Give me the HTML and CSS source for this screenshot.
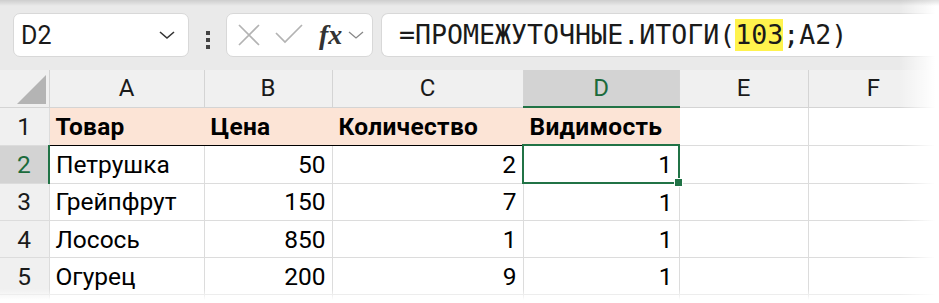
FILE: index.html
```html
<!DOCTYPE html>
<html>
<head>
<meta charset='UTF-8'>
<meta name='viewport' content='width=device-width, initial-scale=1.0'>
<link rel="stylesheet" href="styles.css">
</head>
<body>

<div class="bar">
  <div class="namebox">
    <span class="ref">D2</span>
    <svg class="chev" width="18" height="10" viewBox="0 0 18 10"><path d="M2 2 L9 8 L16 2" fill="none" stroke="#333" stroke-width="1.6"/></svg>
  </div>
  <div class="dots"><i></i><i></i><i></i></div>
  <div class="fxbox">
    <svg width="24" height="24" viewBox="0 0 24 24"><path d="M2 2 L22 22 M22 2 L2 22" stroke="#b3b3b3" stroke-width="1.7" fill="none"/></svg>
    <svg width="30" height="24" viewBox="0 0 30 24"><path d="M2 10 L11 19 L28 2" stroke="#b3b3b3" stroke-width="1.7" fill="none"/></svg>
    <span class="fx">fx</span>
    <svg class="chev" width="16" height="10" viewBox="0 0 16 10"><path d="M1 2 L8 8 L15 2" fill="none" stroke="#888" stroke-width="1.3"/></svg>
  </div>
  <div class="formula">=ПРОМЕЖУТОЧНЫЕ.ИТОГИ(<span class="hl">103</span>;A2)</div>
</div>

<table class="sheet">
  <colgroup>
    <col style="width:49px"><col style="width:155px"><col style="width:128px"><col style="width:191px"><col style="width:156px"><col style="width:129px"><col style="width:131px">
  </colgroup>
  <tr class="heads">
    <th class="corner"><span class="tri"></span></th>
    <th>A</th><th>B</th><th>C</th><th class="sel">D</th><th>E</th><th>F</th>
  </tr>
  <tr class="title">
    <th class="rn">1</th>
    <td>Товар</td><td>Цена</td><td>Количество</td><td>Видимость</td><td class="blank"></td><td class="blank"></td>
  </tr>
  <tr>
    <th class="rn rsel">2</th>
    <td>Петрушка</td><td class="num">50</td><td class="num">2</td><td class="num active">1<span class="handle"></span></td><td></td><td></td>
  </tr>
  <tr>
    <th class="rn">3</th>
    <td>Грейпфрут</td><td class="num">150</td><td class="num">7</td><td class="num">1</td><td></td><td></td>
  </tr>
  <tr>
    <th class="rn">4</th>
    <td>Лосось</td><td class="num">850</td><td class="num">1</td><td class="num">1</td><td></td><td></td>
  </tr>
  <tr>
    <th class="rn">5</th>
    <td>Огурец</td><td class="num">200</td><td class="num">9</td><td class="num">1</td><td></td><td></td>
  </tr>
  <tr class="last">
    <th class="rn"></th>
    <td></td><td></td><td></td><td></td><td></td><td></td>
  </tr>
</table>

<div class="fade-right"></div>
<div class="fade-bottom"></div>
<div class="shade-top"></div>

</body>
</html>
```

FILE: styles.css
```css
body {
    margin: 0;
    padding: 0;
    background: #ffffff;
    font-family: Roboto, "Liberation Sans", Arial, sans-serif;
    overflow: hidden;
    width: 939px;
    height: 303px;
    position: relative;
}

.bar {
    height: 70px;
    box-sizing: border-box;
    background: #eaeaea;
    display: flex;
    align-items: flex-start;
    padding: 13px 0 0 13px;
}

.namebox {
    width: 176px;
    height: 44px;
    box-sizing: border-box;
    background: #fff;
    border: 1px solid #d8d8d8;
    border-radius: 7px;
    display: flex;
    align-items: center;
    justify-content: space-between;
    padding: 0 12px 0 7px;
}
.ref {
    font-size: 25px;
    color: #1a1a1a;
}

.dots {
    width: 37px;
    display: flex;
    flex-direction: column;
    align-items: center;
    gap: 3px;
    padding-top: 18px;
}
.dots i {
    display: block;
    width: 4px;
    height: 4px;
    background: #444;
}

.fxbox {
    width: 147px;
    height: 44px;
    box-sizing: border-box;
    background: #fff;
    border: 1px solid #d8d8d8;
    border-radius: 7px;
    display: flex;
    align-items: center;
    padding: 0 4px 0 10px;
}
.fxbox svg:nth-child(2) {
    margin-left: 13px;
}
.fx {
    font-family: "Liberation Serif", "DejaVu Serif", serif;
    font-style: italic;
    font-weight: bold;
    font-size: 28px;
    color: #333;
    margin-left: 15px;
    line-height: 30px;
}
.fxbox .chev {
    margin-left: 6px;
}

.formula {
    flex: 1;
    margin-left: 8px;
    height: 44px;
    box-sizing: border-box;
    background: #fff;
    border: 1px solid #d8d8d8;
    border-right: none;
    border-radius: 7px 0 0 7px;
    font-family: "DejaVu Sans Mono", "Liberation Mono", monospace;
    font-size: 26.6px;
    color: #1a1a1a;
    line-height: 42px;
    padding-left: 17px;
    white-space: nowrap;
}
.hl {
    background: #fff34d;
    display: inline-block;
    line-height: 32px;
}

.sheet {
    border-collapse: collapse;
    table-layout: fixed;
    width: 939px;
    font-size: 24.5px;
    color: #000;
}
.sheet td, .sheet th {
    height: 36px;
    padding: 0 6px;
    border: 1px solid #dcdcdc;
    white-space: nowrap;
    overflow: visible;
}
.sheet tr:first-child th {
    border-top: none;
}
.sheet th:first-child, .sheet td:first-child {
    border-left: none;
}

.heads th {
    background: #f0f0f0;
    font-weight: normal;
    font-size: 24px;
    color: #1a1a1a;
    border-color: #d4d4d4;
}
.heads th.sel {
    background: #d3d3d3;
    color: #1b6b3c;
    border-bottom: 2px solid #217346;
}
.corner {
    position: relative;
}
.tri {
    position: absolute;
    right: 3px;
    bottom: 3px;
    width: 0;
    height: 0;
    border-left: 29px solid transparent;
    border-bottom: 29px solid #b4b4b4;
}

.rn {
    background: #f0f0f0;
    font-weight: normal;
    text-align: center;
    border-color: #d4d4d4;
    color: #1a1a1a;
}
.rn.rsel {
    background: #d3d3d3;
    color: #1b6b3c;
    border-right: 2px solid #217346;
}

.title td {
    background: #fce4d6;
    font-weight: bold;
    letter-spacing: 0.3px;
    border-color: #fce4d6;
    border-bottom: 1px solid #000;
}
.title td.blank {
    background: #fff;
    border-color: #dcdcdc;
}

.num {
    text-align: right;
}

.sheet td.active {
    border: 2px solid #217346;
    position: relative;
}
.handle {
    position: absolute;
    right: -5px;
    bottom: -5px;
    width: 7px;
    height: 7px;
    background: #217346;
    border: 1px solid #fff;
}

.last td, .last th {
    height: 12px;
}

.fade-right {
    position: absolute;
    top: 0;
    right: 0;
    width: 40px;
    height: 303px;
    background: linear-gradient(to right, rgba(255,255,255,0), #fff 90%);
}
.fade-bottom {
    position: absolute;
    left: 0;
    bottom: 0;
    width: 939px;
    height: 14px;
    background: linear-gradient(to bottom, rgba(255,255,255,0), #fff 80%);
}
.shade-top {
    position: absolute;
    left: 0;
    top: 0;
    width: 939px;
    height: 6px;
    background: linear-gradient(to bottom, rgba(0,0,0,0.12), rgba(0,0,0,0));
}
```
